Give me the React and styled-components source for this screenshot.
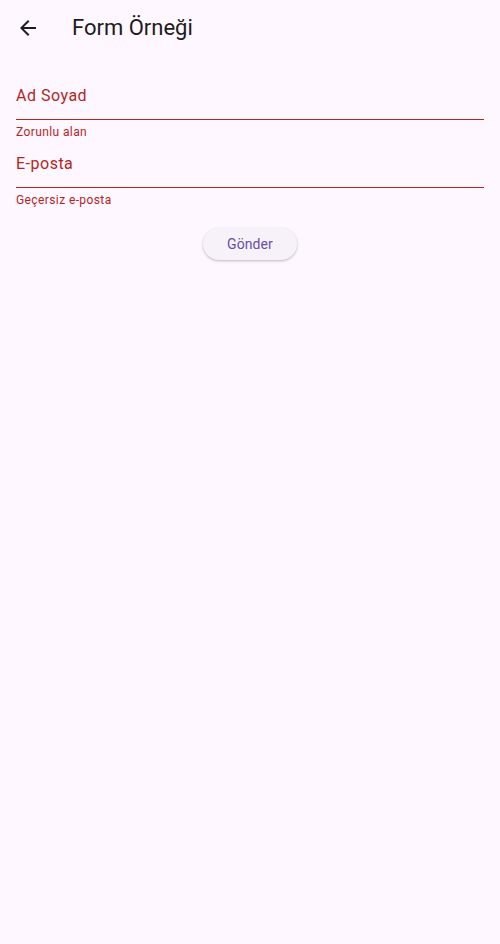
import React from 'react';
import styled, { createGlobalStyle } from 'styled-components';

const GlobalStyle = createGlobalStyle`
  html, body {
    margin: 0;
    padding: 0;
    background: #fef7ff;
    font-family: Roboto, "Noto Sans", sans-serif;
  }
`;

const Page = styled.div`
  min-height: 944px;
  background: #fef7ff;
`;

const AppBar = styled.header`
  height: 56px;
  display: flex;
  align-items: center;
  padding: 0 4px;
`;

const IconButton = styled.button`
  width: 48px;
  height: 48px;
  border: none;
  background: transparent;
  display: flex;
  align-items: center;
  justify-content: center;
  padding: 0;
  color: #1d1b20;
  cursor: pointer;
`;

const Title = styled.h1`
  margin: 0 0 0 20px;
  font-size: 22px;
  font-weight: 400;
  color: #1d1b20;
  line-height: 28px;
`;

const Form = styled.form`
  padding: 16px;
  display: flex;
  flex-direction: column;
`;

const Field = styled.div`
  display: flex;
  flex-direction: column;
`;

const InputBox = styled.div`
  height: 47px;
  border-bottom: 1px solid ${p => (p.error ? '#b3261e' : '#49454f')};
  display: flex;
  align-items: center;
`;

const Label = styled.span`
  font-size: 16px;
  line-height: 24px;
  color: ${p => (p.error ? '#b3261e' : '#49454f')};
  letter-spacing: 0.5px;
`;

const Helper = styled.div`
  height: 16px;
  padding-top: 4px;
  font-size: 12px;
  line-height: 16px;
  color: #b3261e;
  letter-spacing: 0.4px;
`;

const Actions = styled.div`
  display: flex;
  justify-content: center;
  margin-top: 20px;
`;

const Button = styled.button`
  height: 32px;
  padding: 0 24px;
  border: none;
  border-radius: 16px;
  background: #f7f2fa;
  color: #6750a4;
  font-family: Roboto, sans-serif;
  font-size: 14px;
  font-weight: 400;
  letter-spacing: 0.1px;
  box-shadow: 0 1px 2px rgba(0, 0, 0, 0.18), 0 1px 3px 1px rgba(0, 0, 0, 0.06);
  cursor: pointer;
`;

const fields = [
  { label: 'Ad Soyad', error: 'Zorunlu alan' },
  { label: 'E-posta', error: 'Geçersiz e-posta' },
];

export default function App() {
  return (
    <Page>
      <GlobalStyle />
      <AppBar>
        <IconButton aria-label="Geri">
          <svg width="24" height="24" viewBox="0 0 24 24">
            <path d="M20 11H7.83l5.59-5.59L12 4l-8 8 8 8 1.41-1.41L7.83 13H20v-2z" fill="currentColor" />
          </svg>
        </IconButton>
        <Title>Form Örneği</Title>
      </AppBar>
      <Form onSubmit={e => e.preventDefault()}>
        {fields.map(f => (
          <Field key={f.label}>
            <InputBox error>
              <Label error>{f.label}</Label>
            </InputBox>
            <Helper>{f.error}</Helper>
          </Field>
        ))}
        <Actions>
          <Button type="submit">Gönder</Button>
        </Actions>
      </Form>
    </Page>
  );
}
